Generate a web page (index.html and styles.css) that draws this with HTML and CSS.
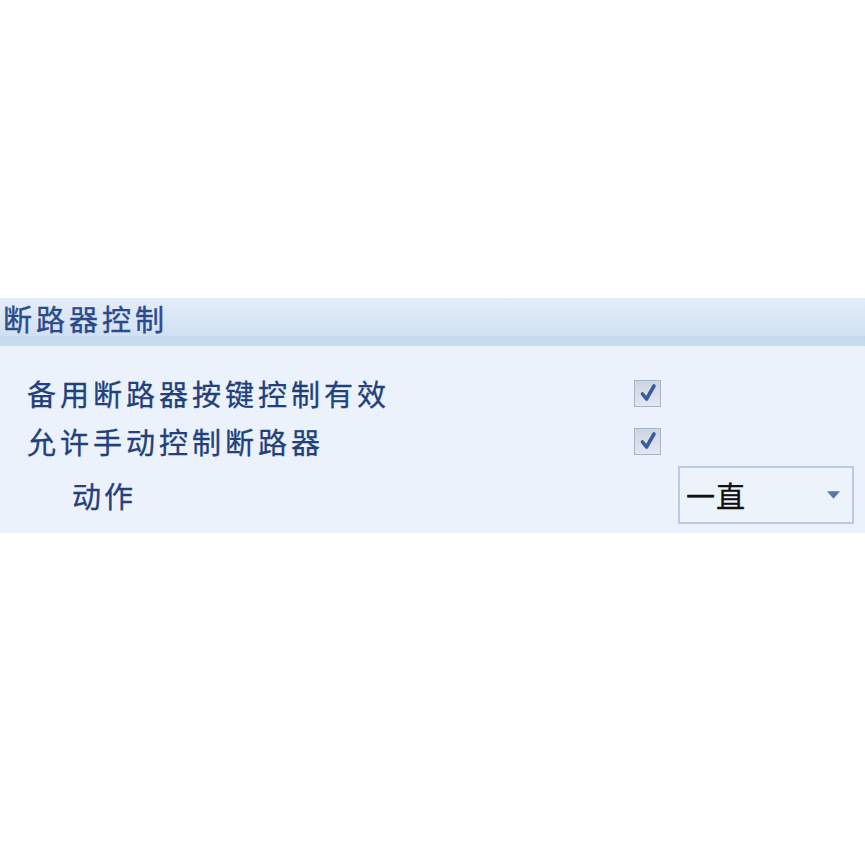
FILE: index.html
```html
<!DOCTYPE html>
<html lang="zh-CN">
<head>
<meta charset="utf-8">
<title>断路器控制</title>
<link rel="stylesheet" href="styles.css">
</head>
<body>
<div class="panel">
  <div class="panel-head">断路器控制</div>
  <div class="panel-body">
    <div class="row">
      <span class="label">备用断路器按键控制有效</span>
      <span class="check"><svg viewBox="0 0 20 20" width="20" height="20"><path d="M4.5 11 L8.5 16 L16 3" fill="none" stroke="#3a5c9c" stroke-width="3.6" stroke-linecap="round" stroke-linejoin="round"/></svg></span>
    </div>
    <div class="row">
      <span class="label">允许手动控制断路器</span>
      <span class="check"><svg viewBox="0 0 20 20" width="20" height="20"><path d="M4.5 11 L8.5 16 L16 3" fill="none" stroke="#3a5c9c" stroke-width="3.6" stroke-linecap="round" stroke-linejoin="round"/></svg></span>
    </div>
    <div class="row row-sub">
      <span class="label sub">动作</span>
      <div class="select">
        <span class="select-text">一直</span>
        <svg class="arrow" viewBox="0 0 12 8" width="13" height="9"><path d="M0 0 H12 L6 7 Z" fill="#5677b0"/></svg>
      </div>
    </div>
  </div>
</div>
</body>
</html>
```
FILE: styles.css
```css
html, body {
  margin: 0;
  padding: 0;
  background: #ffffff;
}
body {
  font-family: "Noto Sans CJK SC", "Noto Sans", sans-serif;
}
.panel {
  margin-top: 298px;
  width: 865px;
}
.panel-head {
  height: 48px;
  box-sizing: border-box;
  padding-left: 3px;
  padding-top: 1px;
  line-height: 38px;
  font-size: 29px;
  letter-spacing: 4px;
  color: #2b4a8c;
  -webkit-text-stroke: 0.4px #2b4a8c;
  background: linear-gradient(to bottom, #e4edf9 0%, #d6e4f4 60%, #cfe0f2 78%, #c3d9ef 80%, #c8dcef 100%);
}
.panel-body {
  background: #ebf2fb;
  padding-top: 23px;
  padding-bottom: 9px;
}
.row {
  display: flex;
  align-items: center;
  height: 48px;
}
.row-sub {
  height: 58px;
  margin-top: 1px;
}
.label {
  width: 607px;
  padding-left: 27px;
  font-size: 29px;
  letter-spacing: 4px;
  color: #22407c;
  -webkit-text-stroke: 0.3px #22407c;
}
.label.sub {
  width: 606px;
  padding-left: 72px;
  letter-spacing: 3px;
}
.check {
  width: 25px;
  height: 25px;
  border: 1px solid #a6b5ca;
  background: linear-gradient(to bottom, #ccd5e1, #e2e8ef);
  display: flex;
  align-items: center;
  justify-content: center;
}
.select {
  width: 176px;
  height: 58px;
  box-sizing: border-box;
  border: 2px solid #b9cce4;
  background: #edf3fb;
  display: flex;
  align-items: center;
  justify-content: space-between;
  padding: 0 12px 0 6px;
}
.select-text {
  font-size: 29px;
  color: #111111;
  letter-spacing: 1px;
  -webkit-text-stroke: 0.3px #111111;
}
.arrow {
  display: block;
}
```
